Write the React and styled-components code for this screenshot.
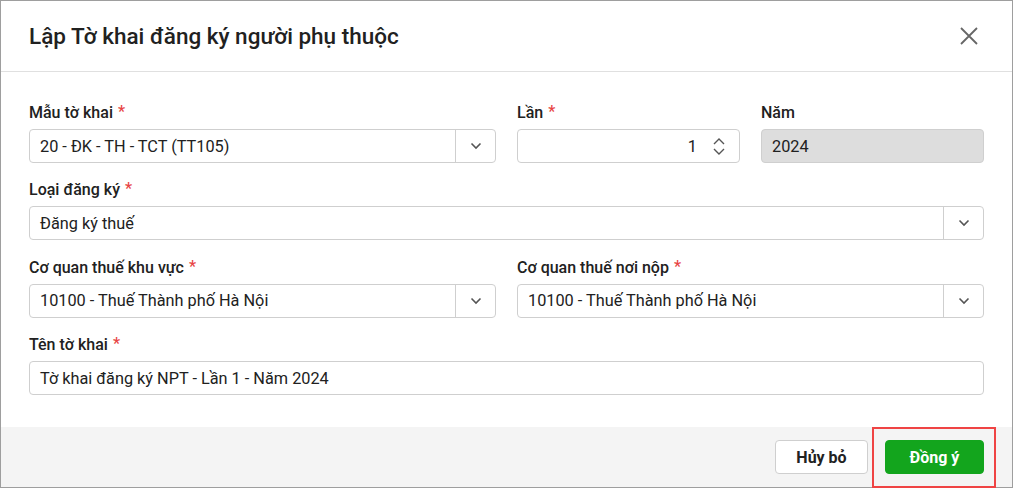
import React from "react";
import styled, { createGlobalStyle } from "styled-components";

const Global = createGlobalStyle`
  html, body { margin: 0; padding: 0; background: #fff; }
  body { font-family: Roboto, "Noto Sans", Arial, sans-serif; color: #212121; }
  * { box-sizing: border-box; }
`;

const Frame = styled.div`
  position: relative;
  width: 1013px;
  height: 488px;
  border: 1px solid #9e9e9e;
  display: flex;
  flex-direction: column;
  background: #fff;
`;

const Header = styled.div`
  height: 71px;
  flex: none;
  border-bottom: 1px solid #e0e0e0;
  display: flex;
  align-items: center;
  justify-content: space-between;
  padding: 0 31px 0 28px;
`;

const Title = styled.h1`
  margin: 0;
  font-size: 22.5px;
  font-weight: 500;
  color: #212121;
  letter-spacing: 0;
`;

const CloseBtn = styled.button`
  width: 24px;
  height: 24px;
  padding: 0;
  border: none;
  background: transparent;
  display: flex;
  align-items: center;
  justify-content: center;
  cursor: pointer;
`;

const Body = styled.div`
  flex: 1;
  padding: 31px 28px 0;
  display: grid;
  grid-template-columns: repeat(4, 1fr);
  column-gap: 21px;
  row-gap: 17.4px;
  align-content: start;
`;

const Field = styled.div`
  grid-column: span ${(p) => p.$span || 1};
  display: flex;
  flex-direction: column;
`;

const Label = styled.label`
  font-size: 16px;
  font-weight: 500;
  line-height: 20px;
  height: 20px;
  margin-bottom: 6px;
  color: #212121;
  white-space: nowrap;
`;

const Req = styled.span`
  color: #e84545;
  margin-left: 5px;
  font-size: 16px;
  position: relative;
  top: -1px;
`;

const Box = styled.div`
  height: 34px;
  border: 1px solid #cfcfcf;
  border-radius: 4px;
  display: flex;
  align-items: center;
  background: ${(p) => (p.$disabled ? "#dddddd" : "#fff")};
  overflow: hidden;
`;

const Value = styled.div`
  flex: 1;
  padding: 0 10px;
  font-size: 16.3px;
  color: #212121;
  text-align: ${(p) => (p.$right ? "right" : "left")};
  white-space: nowrap;
`;

const Arrow = styled.div`
  width: 40px;
  height: 100%;
  border-left: 1px solid #cfcfcf;
  display: flex;
  align-items: center;
  justify-content: center;
`;

const Spinner = styled.div`
  width: 24px;
  height: 100%;
  margin-right: 8px;
  display: flex;
  flex-direction: column;
  align-items: center;
  justify-content: center;
  gap: 3px;
`;

const Footer = styled.div`
  height: 60px;
  flex: none;
  background: #f4f4f4;
  display: flex;
  align-items: center;
  justify-content: flex-end;
  gap: 17px;
  padding: 0 28px;
`;

const Button = styled.button`
  height: 34px;
  min-width: ${(p) => (p.$primary ? "99px" : "93px")};
  padding: 0 16px;
  border-radius: 4px;
  border: 1px solid ${(p) => (p.$primary ? "#13a51d" : "#cfcfcf")};
  background: ${(p) => (p.$primary ? "#13a51d" : "#fff")};
  color: ${(p) => (p.$primary ? "#fff" : "#212121")};
  font-family: Roboto, Arial, sans-serif;
  font-size: 16px;
  font-weight: 700;
  cursor: pointer;
`;

const Highlight = styled.div`
  position: absolute;
  left: 871px;
  top: 426px;
  width: 124px;
  height: 61px;
  border: 2px solid #ef4444;
  pointer-events: none;
`;

const Chevron = ({ up }) => (
  <svg width="12" height="8" viewBox="0 0 12 8">
    <path
      d={up ? "M1 7 L6 2 L11 7" : "M1 1 L6 6 L11 1"}
      fill="none"
      stroke="#555"
      strokeWidth="1.4"
    />
  </svg>
);

const SmallChevron = () => (
  <svg width="12" height="8" viewBox="0 0 12 8">
    <path d="M1.5 1.5 L6 6 L10.5 1.5" fill="none" stroke="#555" strokeWidth="1.6" />
  </svg>
);

const Select = ({ value }) => (
  <Box>
    <Value>{value}</Value>
    <Arrow>
      <SmallChevron />
    </Arrow>
  </Box>
);

export default function App() {
  return (
    <>
      <Global />
      <Frame>
        <Header>
          <Title>Lập Tờ khai đăng ký người phụ thuộc</Title>
          <CloseBtn aria-label="Đóng">
            <svg width="18" height="18" viewBox="0 0 18 18">
              <path d="M1 1 L17 17 M17 1 L1 17" stroke="#666" strokeWidth="1.8" />
            </svg>
          </CloseBtn>
        </Header>
        <Body>
          <Field $span={2}>
            <Label>
              Mẫu tờ khai<Req>*</Req>
            </Label>
            <Select value="20 - ĐK - TH - TCT (TT105)" />
          </Field>
          <Field>
            <Label>
              Lần<Req>*</Req>
            </Label>
            <Box>
              <Value $right>1</Value>
              <Spinner>
                <Chevron up />
                <Chevron />
              </Spinner>
            </Box>
          </Field>
          <Field>
            <Label>Năm</Label>
            <Box $disabled>
              <Value>2024</Value>
            </Box>
          </Field>
          <Field $span={4}>
            <Label>
              Loại đăng ký<Req>*</Req>
            </Label>
            <Select value="Đăng ký thuế" />
          </Field>
          <Field $span={2}>
            <Label>
              Cơ quan thuế khu vực<Req>*</Req>
            </Label>
            <Select value="10100 - Thuế Thành phố Hà Nội" />
          </Field>
          <Field $span={2}>
            <Label>
              Cơ quan thuế nơi nộp<Req>*</Req>
            </Label>
            <Select value="10100 - Thuế Thành phố Hà Nội" />
          </Field>
          <Field $span={4}>
            <Label>
              Tên tờ khai<Req>*</Req>
            </Label>
            <Box>
              <Value>Tờ khai đăng ký NPT - Lần 1 - Năm 2024</Value>
            </Box>
          </Field>
        </Body>
        <Footer>
          <Button>Hủy bỏ</Button>
          <Button $primary>Đồng ý</Button>
        </Footer>
        <Highlight />
      </Frame>
    </>
  );
}
